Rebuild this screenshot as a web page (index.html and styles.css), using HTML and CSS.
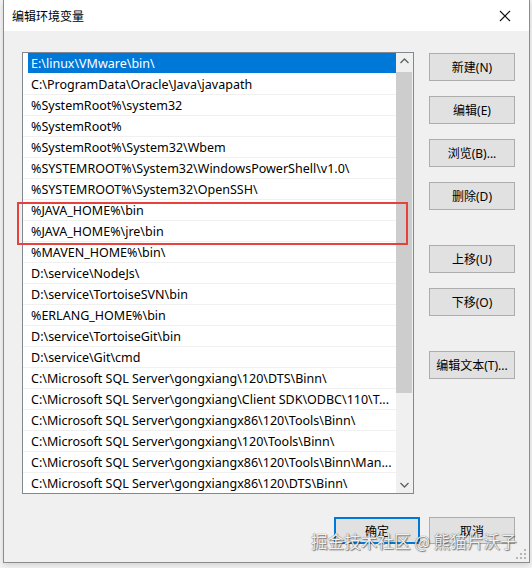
FILE: index.html
```html
<!DOCTYPE html>
<html lang="zh-CN">
<head>
    <meta charset="UTF-8">
    <title>编辑环境变量</title>
    <link rel="stylesheet" href="styles.css">
</head>
<body>
    <div class="window">
        <div class="titlebar">
            <span class="title">编辑环境变量</span>
            <svg class="close" width="12" height="12" viewBox="0 0 12 12">
                <path d="M1 1 L11 11 M11 1 L1 11" stroke="#111" stroke-width="1.1" fill="none"/>
            </svg>
        </div>
        <div class="content">
            <div class="main">
                <div class="listbox">
                    <ul class="rows">
                        <li class="selected">E:\linux\VMware\bin\</li>
                        <li>C:\ProgramData\Oracle\Java\javapath</li>
                        <li>%SystemRoot%\system32</li>
                        <li>%SystemRoot%</li>
                        <li>%SystemRoot%\System32\Wbem</li>
                        <li>%SYSTEMROOT%\System32\WindowsPowerShell\v1.0\</li>
                        <li>%SYSTEMROOT%\System32\OpenSSH\</li>
                        <li>%JAVA_HOME%\bin</li>
                        <li>%JAVA_HOME%\jre\bin</li>
                        <li>%MAVEN_HOME%\bin\</li>
                        <li>D:\service\NodeJs\</li>
                        <li>D:\service\TortoiseSVN\bin</li>
                        <li>%ERLANG_HOME%\bin</li>
                        <li>D:\service\TortoiseGit\bin</li>
                        <li>D:\service\Git\cmd</li>
                        <li>C:\Microsoft SQL Server\gongxiang\120\DTS\Binn\</li>
                        <li>C:\Microsoft SQL Server\gongxiang\Client SDK\ODBC\110\T...</li>
                        <li>C:\Microsoft SQL Server\gongxiangx86\120\Tools\Binn\</li>
                        <li>C:\Microsoft SQL Server\gongxiang\120\Tools\Binn\</li>
                        <li>C:\Microsoft SQL Server\gongxiangx86\120\Tools\Binn\Man...</li>
                        <li>C:\Microsoft SQL Server\gongxiangx86\120\DTS\Binn\</li>
                    </ul>
                    <div class="scrollbar">
                        <svg class="arrow" width="17" height="17" viewBox="0 0 17 17">
                            <path d="M4.5 10 L8.5 6 L12.5 10" stroke="#606060" stroke-width="1.3" fill="none"/>
                        </svg>
                        <div class="track"><div class="thumb"></div></div>
                        <svg class="arrow" width="17" height="17" viewBox="0 0 17 17">
                            <path d="M4.5 7 L8.5 11 L12.5 7" stroke="#606060" stroke-width="1.3" fill="none"/>
                        </svg>
                    </div>
                </div>
                <div class="side">
                    <button class="btn">新建(N)</button>
                    <button class="btn">编辑(E)</button>
                    <button class="btn">浏览(B)...</button>
                    <button class="btn">删除(D)</button>
                    <button class="btn group">上移(U)</button>
                    <button class="btn">下移(O)</button>
                    <button class="btn group">编辑文本(T)...</button>
                </div>
            </div>
            <div class="footer">
                <button class="btn default">确定</button>
                <button class="btn">取消</button>
            </div>
            <div class="mark"></div>
            <svg class="grip" width="10" height="10" viewBox="0 0 10 10">
                <rect x="8" y="0" width="2" height="2" fill="#b5b5b5"/>
                <rect x="4" y="4" width="2" height="2" fill="#b5b5b5"/>
                <rect x="8" y="4" width="2" height="2" fill="#b5b5b5"/>
                <rect x="0" y="8" width="2" height="2" fill="#b5b5b5"/>
                <rect x="4" y="8" width="2" height="2" fill="#b5b5b5"/>
                <rect x="8" y="8" width="2" height="2" fill="#b5b5b5"/>
            </svg>
        </div>
    </div>
    <div class="watermark">掘金技术社区 @ 熊猫片沃子</div>
</body>
</html>
```

FILE: styles.css
```css
body {
    margin: 0;
    width: 532px;
    height: 568px;
    background: #f4f4f4;
    font-family: "Noto Sans", "Noto Sans CJK SC", sans-serif;
    font-size: 12px;
    color: #000;
    position: relative;
    overflow: hidden;
}
.window {
    box-sizing: border-box;
    width: 527px;
    height: 563px;
    margin-left: 3px;
    border: 1px solid #8c8c8c;
    border-top: none;
    background: #f0f0f0;
    box-shadow: 0 2px 6px rgba(0, 0, 0, 0.15);
}
.titlebar {
    height: 31px;
    background: #fff;
    display: flex;
    align-items: center;
    justify-content: space-between;
    padding: 0 18px 0 8px;
}
.title {
    font-family: "Noto Sans CJK SC", sans-serif;
    font-size: 12px;
    color: #000;
}
.close {
    display: block;
}
.content {
    position: relative;
    padding: 21px 0 0 18px;
    height: 510px;
}
.main {
    display: flex;
    align-items: flex-start;
}
.listbox {
    box-sizing: border-box;
    width: 392px;
    height: 442px;
    border: 1px solid #828790;
    background: #fff;
    display: flex;
    overflow: hidden;
}
.rows {
    list-style: none;
    margin: 0;
    padding: 0;
    flex: 1;
    min-width: 0;
}
.rows li {
    box-sizing: border-box;
    height: 21px;
    line-height: 20px;
    padding: 1px 0 0 8px;
    border-bottom: 1px solid #f0f0f0;
    font-size: 12.5px;
    white-space: nowrap;
    overflow: hidden;
}
.rows li.selected {
    background: linear-gradient(to right, #fff 5px, #0078d7 5px);
    color: #fff;
    border-bottom-color: #fff;
}
.scrollbar {
    width: 17px;
    background: #f0f0f0;
    display: flex;
    flex-direction: column;
}
.arrow {
    display: block;
    flex: none;
}
.track {
    flex: 1;
    padding: 2px 1px 0 0;
}
.thumb {
    height: 321px;
    background: #cdcdcd;
}
.side {
    display: flex;
    flex-direction: column;
    gap: 15px;
    margin-left: 15px;
    padding-top: 1px;
}
.btn {
    box-sizing: border-box;
    width: 86px;
    height: 28px;
    padding: 0;
    background: #e1e1e1;
    border: 1px solid #adadad;
    font-family: "Noto Sans", "Noto Sans CJK SC", sans-serif;
    font-size: 12px;
    color: #000;
}
.side .group {
    margin-top: 20px;
}
.footer {
    display: flex;
    justify-content: flex-end;
    gap: 9px;
    margin: 23px 14px 0 0;
}
.footer .btn {
    height: 27px;
}
.btn.default {
    border: 2px solid #0078d7;
}
.mark {
    position: absolute;
    left: 13px;
    top: 171px;
    width: 391px;
    height: 43px;
    box-sizing: border-box;
    border: 2px solid #e6413d;
}
.grip {
    position: absolute;
    right: 3px;
    bottom: 3px;
}
.watermark {
    position: absolute;
    left: 311px;
    top: 529px;
    font-family: "Noto Sans CJK SC", sans-serif;
    font-size: 16.6px;
    color: rgba(255, 255, 255, 0.92);
    text-shadow: 0 0 1px #4a4a4a, 1px 1px 1px rgba(0, 0, 0, 0.45);
    white-space: nowrap;
}
```
